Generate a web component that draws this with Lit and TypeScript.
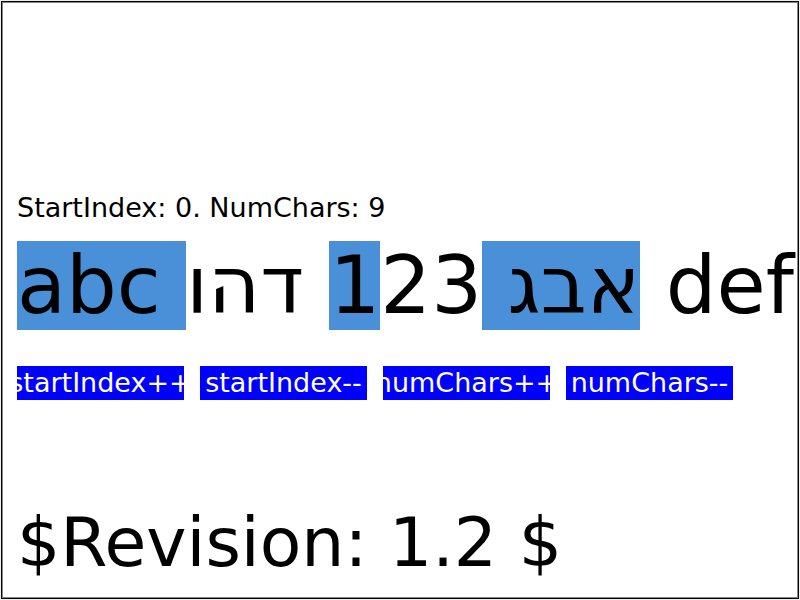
import { LitElement, html, css } from "lit";
import { customElement, state } from "lit/decorators.js";

@customElement("app-root")
export class AppRoot extends LitElement {
  static styles = css`
    :host {
      display: block;
      box-sizing: border-box;
      min-height: 100vh;
      padding: 1px;
      background: #eee;
      font-family: "DejaVu Sans", sans-serif;
      color: #000;
    }
    .frame {
      box-sizing: border-box;
      min-height: calc(100vh - 2px);
      display: flex;
      flex-direction: column;
      justify-content: flex-end;
      padding: 0 0 10px 15px;
      border: 1px solid #000;
      box-shadow: inset 0 0 0 1px #888;
      background: #fff;
      overflow: hidden;
    }
    .status {
      margin: 0 0 17px;
      font-size: 27px;
      line-height: 32px;
      white-space: nowrap;
    }
    .sample {
      margin: 0 0 35px;
      font-size: 80px;
      line-height: 90px;
      white-space: pre;
    }
    .selected {
      background: linear-gradient(#4a90d9, #4a90d9) center / 100% 89px no-repeat;
    }
    .controls {
      display: flex;
      gap: 16px;
      margin-bottom: 98px;
    }
    button {
      display: flex;
      justify-content: center;
      align-items: center;
      width: 167px;
      height: 34px;
      flex: none;
      padding: 0;
      border: 0;
      border-radius: 0;
      overflow: hidden;
      background: #00f;
      color: #fff;
      font: inherit;
      font-size: 27px;
      line-height: 32px;
      white-space: nowrap;
    }
    .revision {
      margin: 0;
      font-size: 68px;
      line-height: 90px;
      white-space: nowrap;
    }
  `;

  @state() private startIndex = 0;
  @state() private numChars = 9;
  private text = "abc אבג 123 דהו def";

  private moveStart(step: number) {
    this.startIndex = Math.max(0, this.startIndex + step);
  }

  private resize(step: number) {
    this.numChars = Math.max(0, this.numChars + step);
  }

  render() {
    const end = this.startIndex + this.numChars;
    return html`
      <main class="frame">
        <p class="status">StartIndex: ${this.startIndex}. NumChars: ${this.numChars}</p>
        <p class="sample">${this.text.slice(0, this.startIndex)}<span class="selected">${this.text.slice(this.startIndex, end)}</span>${this.text.slice(end)}</p>
        <div class="controls">
          <button type="button" @click=${() => this.moveStart(1)}>startIndex++</button>
          <button type="button" @click=${() => this.moveStart(-1)}>startIndex--</button>
          <button type="button" @click=${() => this.resize(1)}>numChars++</button>
          <button type="button" @click=${() => this.resize(-1)}>numChars--</button>
        </div>
        <p class="revision">$Revision: 1.2 $</p>
      </main>
    `;
  }
}
